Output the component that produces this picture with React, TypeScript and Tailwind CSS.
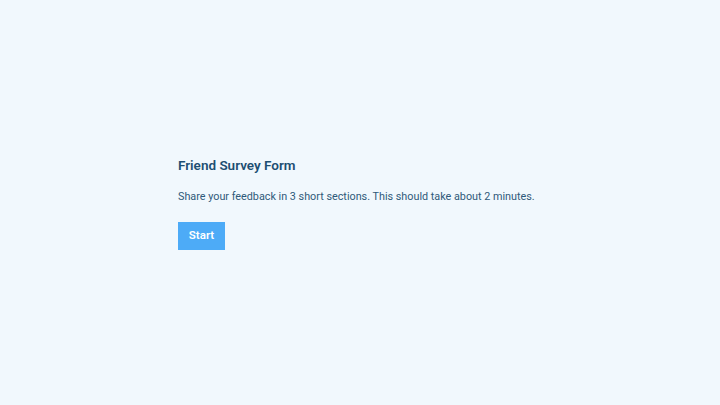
import React from "react";

export default function App() {
    return (
        <div
            className="flex min-h-screen items-center justify-center bg-[#f1f8fd] text-[#1f4f73]"
            style={{ fontFamily: "Roboto, 'Liberation Sans', sans-serif" }}
        >
            <div className="w-[364px]">
                <h1 className="text-[13.5px] font-semibold leading-5 text-[#1d4e72]">Friend Survey Form</h1>
                <p className="mt-[14px] text-[10.8px] leading-4 text-[#2f5a7a]">
                    Share your feedback in 3 short sections. This should take about 2 minutes.
                </p>
                <button
                    type="button"
                    className="mt-[17px] flex h-[28px] w-[47px] items-center justify-center bg-[#4dabf7] text-[11.5px] font-semibold text-white"
                >
                    Start
                </button>
            </div>
        </div>
    );
}
